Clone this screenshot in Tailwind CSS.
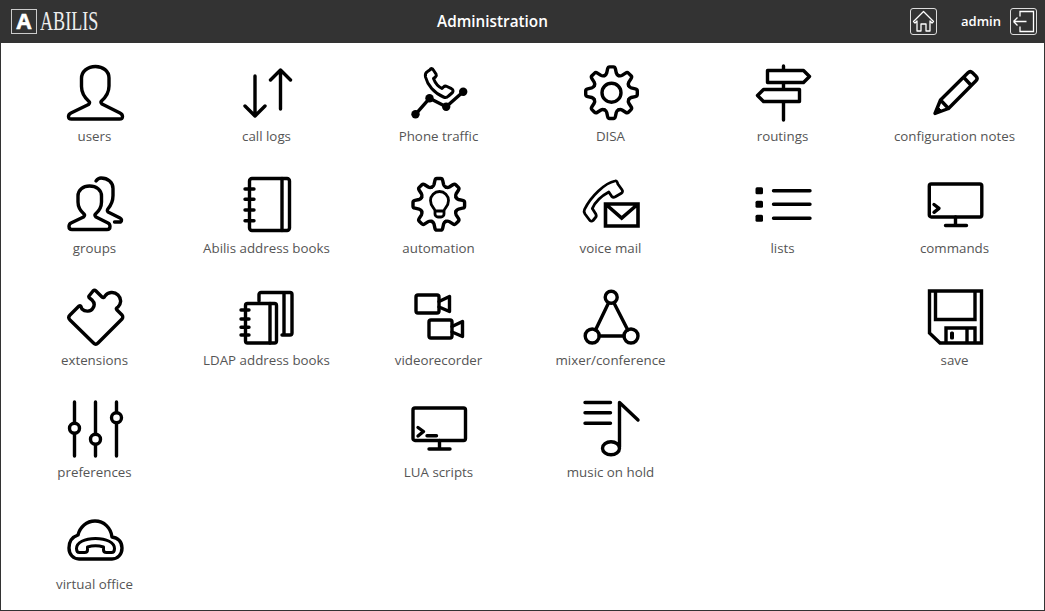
<!DOCTYPE html>
<html lang="en">
  <head>
    <meta charset="UTF-8" />
    <title>Administration</title>
    <script src="https://cdn.jsdelivr.net/npm/@tailwindcss/browser@4"></script>
  </head>
  <body class="bg-white font-['Open_Sans',sans-serif] overflow-hidden">
    <div class="w-[1045px] h-[611px] border border-t-0 border-[#333] box-border">
      <!-- top bar -->
      <header class="h-[43px] -mx-px bg-[#333] flex items-center pl-[11px] pr-[8px] text-white">
        <div class="w-[399px] flex items-center">
          <div class="w-[26px] h-[25px] border border-[#ccc] flex items-center justify-center">
            <span class="font-['Liberation_Sans',sans-serif] font-bold text-[22px] leading-none [-webkit-text-stroke:0.6px_#fff]">A</span>
          </div>
          <span class="ml-[3px] font-['Liberation_Serif',serif] text-[27px] leading-none scale-x-[0.67] origin-left text-[#eee]">ABILIS</span>
        </div>
        <div class="w-[165px] text-center text-[15.3px] font-semibold">Administration</div>
        <button class="ml-auto w-[27px] h-[27px] border border-[#ddd] rounded-[3px] flex items-center justify-center">
          <svg width="23" height="23" viewBox="0 0 23 23" fill="none" stroke="#fff" stroke-width="1.3" stroke-linejoin="round"><path d="M1.5 11.5 11.5 1.5l10 10-1.5 1.500-2-2v10h-4v-7H9v7H5V11l-2 2z"/></svg>
        </button>
        <span class="ml-[24px] text-[13px] font-semibold">admin</span>
        <button class="ml-[9px] w-[27px] h-[27px] border border-[#ddd] rounded-[3px] flex items-center justify-center">
          <svg width="25" height="25" viewBox="0 0 25 25" fill="none" stroke="#fff" stroke-width="1.3"><path d="M9 7.500V2.500h13.500v20H9v-5M2.500 12.500h13M2.500 12.500l4-4M2.500 12.500l4 4"/></svg>
        </button>
      </header>

      <svg width="0" height="0" class="absolute">
        <defs>
          <path id="tooth" d="M-7.100-17.100Q-5.300-17.900-4.800-19.700L-3.900-23.800Q-3.500-25.800-1.900-25.800H1.900Q3.500-25.800 3.900-23.800L4.800-19.700Q5.300-17.900 7.100-17.100"/>
          <g id="gear">
            <use href="#tooth"/>
            <use href="#tooth" transform="rotate(45)"/>
            <use href="#tooth" transform="rotate(90)"/>
            <use href="#tooth" transform="rotate(135)"/>
            <use href="#tooth" transform="rotate(180)"/>
            <use href="#tooth" transform="rotate(225)"/>
            <use href="#tooth" transform="rotate(270)"/>
            <use href="#tooth" transform="rotate(315)"/>
          </g>
        </defs>
      </svg>

      <main class="ml-[7.5px] pt-[20px] grid grid-cols-[repeat(6,172px)] auto-rows-[112px] text-[13.33px] leading-[18px] text-[#555]">
        <!-- row 1 -->
        <a class="flex flex-col items-center">
          <svg width="60" height="60" viewBox="0 0 60 60" fill="none" stroke="#000" stroke-width="3.400" stroke-linecap="round" stroke-linejoin="round"><path d="M30.500 3.500c-8 0-14 5-14 12v8c0 6 3 11 7.500 15 1 1 .5 2-.5 3L6 50c-2 1-2.500 2-2.500 3.500 0 2 1 2.500 3 2.500h48c2 0 3-.5 3-2.500 0-1.500-.5-2.500-2.500-3.500L37 41c-1-1-1.500-2-.5-3 4.500-4 7.500-9 7.500-15v-8c0-7-6-11.500-13.500-11.500z"/></svg>
          <span class="mt-[4px]">users</span>
        </a>
        <a class="flex flex-col items-center">
          <svg width="60" height="60" viewBox="0 0 60 60" fill="none" stroke="#000" stroke-width="3.400" stroke-linecap="round" stroke-linejoin="round"><path d="M18 13V53M8 43l10 10 10-10M43.500 7V46M33.500 17 43.500 7l10 10"/></svg>
          <span class="mt-[4px]">call logs</span>
        </a>
        <a class="flex flex-col items-center">
          <svg width="60" height="60" viewBox="0 0 60 60" fill="none" stroke="#000" stroke-width="3.400" stroke-linecap="round" stroke-linejoin="round"><path stroke-width="3" d="M21.500 6.500l-3 2c-2.500 1.500-2.500 3-2 5.500 2 8 8.500 16 18 20 2 .8 3.500.5 5-1l4-3.500c1-1.500.5-3-1-3.800l-4.500-2.200c-1.500-.7-2.500-.5-3.500.5l-1.500 1.500c-4-2-7-6-8.500-10l2-1.500c1-1 1-2 .5-3l-3-4.500c-.5-1-1.500-1.200-2.500-.5z"/><path d="M6.500 51.300 20.500 35.300 37.200 43.700 54.200 28.700"/><g fill="#000" stroke="none"><circle cx="6.500" cy="51.300" r="4.200"/><circle cx="20.500" cy="35.300" r="4.200"/><circle cx="37.200" cy="43.700" r="4.200"/><circle cx="54.200" cy="28.700" r="4.200"/></g></svg>
          <span class="mt-[4px]">Phone traffic</span>
        </a>
        <a class="flex flex-col items-center">
          <svg width="60" height="60" viewBox="0 0 60 60" fill="none" stroke="#000" stroke-width="3.400" stroke-linecap="round" stroke-linejoin="round"><use href="#gear" x="30.500" y="29.700"/><circle cx="30.500" cy="29.700" r="9.500"/></svg>
          <span class="mt-[4px]">DISA</span>
        </a>
        <a class="flex flex-col items-center">
          <svg width="60" height="60" viewBox="0 0 60 60" fill="none" stroke="#000" stroke-width="3.400" stroke-linecap="round" stroke-linejoin="round"><path d="M14.500 7.500H50.500l6 6-6 6H14.500zM46.500 26.500H10.500l-6 6 6 6h36zM30.500 3V7.500M30.500 19.500v7M30.500 38.500V57"/></svg>
          <span class="mt-[4px]">routings</span>
        </a>
        <a class="flex flex-col items-center">
          <svg width="60" height="60" viewBox="0 0 60 60" fill="none" stroke="#000" stroke-width="3.400" stroke-linecap="round" stroke-linejoin="round"><path d="M15.500 37 43 9.800c1.500-1.500 3-1.500 4.500 0l3.500 3.500c1.500 1.500 1.500 3 0 4.500L23.500 45.500 10 50.500zM38.800 14.500l7.500 8M15.500 37l8 8.500"/><path fill="#000" d="M10 50.500l2.500-7 4.500 4.500z" stroke-width="1"/></svg>
          <span class="mt-[4px]">configuration notes</span>
        </a>

        <!-- row 2 -->
        <a class="flex flex-col items-center">
          <svg width="60" height="60" viewBox="0 0 60 60" fill="none" stroke="#000" stroke-width="3.400" stroke-linecap="round" stroke-linejoin="round"><path d="M24.500 11c-6.500 0-11.500 4-11.500 10v6c0 5 2.500 9 6 12 1 1 .5 2-.5 3L6 48c-2 1-2 2-2 3.500 0 2 1 3 3 3h35c2 0 3-1 3-3 0-1.500 0-2.500-2-3.500L31 42c-1-1-1.500-2-.5-3 3.500-3 6-7 6-12v-6c0-6-5-10-12-10z"/><path d="M31 6c1.500-2 3-3 5-3 7 0 12 4.500 12 10.500v7c0 5-2 10-5.500 14-.5 1-.2 1.500.5 2.500L55 43c2 1 2 3 .5 4h-6"/></svg>
          <span class="mt-[4px]">groups</span>
        </a>
        <a class="flex flex-col items-center">
          <svg width="60" height="60" viewBox="0 0 60 60" fill="none" stroke="#000" stroke-width="3.400" stroke-linecap="round" stroke-linejoin="round"><rect x="12.500" y="3.500" width="40" height="52" rx="2.500"/><path d="M45 3.500v52M8 14h9M8 24.300h9M8 35h9M8 45.700h9"/></svg>
          <span class="mt-[4px]">Abilis address books</span>
        </a>
        <a class="flex flex-col items-center">
          <svg width="60" height="60" viewBox="0 0 60 60" fill="none" stroke="#000" stroke-width="3.400" stroke-linecap="round" stroke-linejoin="round"><use href="#gear" x="29.800" y="29.300"/><path stroke-width="2.800" d="M26 36c0-3-4.500-4-4.500-10.500a9 9 0 0 1 18 0c0 6.500-4.500 7.500-4.500 10.500zM26 36v3a3 3 0 0 0 3 3h3a3 3 0 0 0 3-3v-3"/></svg>
          <span class="mt-[4px]">automation</span>
        </a>
        <a class="flex flex-col items-center">
          <svg width="60" height="60" viewBox="0 0 60 60" fill="none" stroke="#000" stroke-width="3.400" stroke-linecap="round" stroke-linejoin="round"><path stroke-width="2.800" d="M34 6C24 8 10 21 3.500 34.500c-1 2-.5 3 .5 4.500l4.500 6c1 1.500 2.500 1.500 3.500.5l2.500-3c1-1 1-2 .3-3.500l-3.500-5.500c3-7 10-13 16.500-16.500l3 4.500c1 1 2.200 1 3.500.3l6-3.500c1.500-1 1.500-2.500.7-3.500l-4-5.500C36 6 35.300 5.700 34 6z"/><path fill="#fff" stroke="none" d="M22 26h38v28H22z"/><path stroke-linejoin="miter" stroke-linecap="butt" stroke-width="3.600" d="M24.500 29h32.500v22H24.500zM24.500 29 40.700 43 57 29"/></svg>
          <span class="mt-[4px]">voice mail</span>
        </a>
        <a class="flex flex-col items-center">
          <svg width="60" height="60" viewBox="0 0 60 60" fill="none" stroke="#000" stroke-width="3.400" stroke-linecap="round" stroke-linejoin="round"><path d="M20.500 15.700H57M20.500 29.300H57M20.500 43.300H57"/><g fill="#000" stroke="none"><rect x="2.500" y="12.200" width="7.500" height="7" rx="1.500"/><rect x="2.500" y="25.800" width="7.500" height="7" rx="1.500"/><rect x="2.500" y="39.800" width="7.500" height="7" rx="1.500"/></g></svg>
          <span class="mt-[4px]">lists</span>
        </a>
        <a class="flex flex-col items-center">
          <svg width="60" height="60" viewBox="0 0 60 60" fill="none" stroke="#000" stroke-width="3.400" stroke-linecap="round" stroke-linejoin="round"><rect x="4.300" y="9" width="52.500" height="33" rx="2"/><path d="M30.500 42v8.500M20.500 50.500h21M9 29.500l5 3.800-5 4"/></svg>
          <span class="mt-[4px]">commands</span>
        </a>

        <!-- row 3 -->
        <a class="flex flex-col items-center">
          <svg width="60" height="60" viewBox="0 0 60 60" fill="none" stroke="#000" stroke-width="3.400" stroke-linecap="round" stroke-linejoin="round"><path d="M5 28l9-9c2-1 2 1 3 3 3 3 9 3 11-1 2-3 1-6-1-8-2-2-4-2-3-4l4-5c1-1 2-1 3 0l6 6c1 1 2 1 3-1 3-4 9-5 13-1 4 4 3 9 0 12-2 1-2 2-1 3l5 5c1 1 1 3 0 4L33 56c-1.500 1.500-3 1.500-4.500 0L5 33c-1.500-1.500-1.500-3.500 0-5z"/></svg>
          <span class="mt-[4px]">extensions</span>
        </a>
        <a class="flex flex-col items-center">
          <svg width="60" height="60" viewBox="0 0 60 60" fill="none" stroke="#000" stroke-width="3.400" stroke-linecap="round" stroke-linejoin="round"><rect x="8.500" y="16.500" width="31" height="39.500" rx="2"/><path d="M33 16.500V56M4 23h8M4 32h8M4 40.300h8M4 48h8M22 14V7.500c0-1.500 1-2 2-2h29c1.500 0 2 1 2 2V46c0 1.500-.5 2-2 2h-8M47 5.500V48"/></svg>
          <span class="mt-[4px]">LDAP address books</span>
        </a>
        <a class="flex flex-col items-center">
          <svg width="60" height="60" viewBox="0 0 60 60" fill="none" stroke="#000" stroke-width="3.400" stroke-linecap="round" stroke-linejoin="round"><rect x="7" y="8" width="23" height="18" rx="2"/><path d="M30 14.500 40.500 9.500v15L30 20"/><rect x="20" y="33" width="23" height="18" rx="2"/><path d="M43 39.500 53.500 34.500v15L43 45"/></svg>
          <span class="mt-[4px]">videorecorder</span>
        </a>
        <a class="flex flex-col items-center">
          <svg width="60" height="60" viewBox="0 0 60 60" fill="none" stroke="#000" stroke-width="3.400" stroke-linecap="round" stroke-linejoin="round"><circle cx="30.200" cy="10.300" r="6"/><circle cx="11.200" cy="49" r="7"/><circle cx="50" cy="49" r="7"/><path d="M27.500 16 14.500 43M33 16 46.800 43M18.200 49H43"/></svg>
          <span class="mt-[4px]">mixer/conference</span>
        </a>
        <a class="col-start-6 flex flex-col items-center">
          <svg width="60" height="60" viewBox="0 0 60 60" fill="none" stroke="#000" stroke-width="3.400" stroke-linecap="square" stroke-linejoin="miter"><path d="M4.500 4H56.500V56H15L4.500 46zM10.500 4V32.500H50V4M21 56V41H50V56M42 41V56"/><rect x="25" y="44.500" width="4" height="8" rx="1.500" fill="#000" stroke="none"/></svg>
          <span class="mt-[4px]">save</span>
        </a>

        <!-- row 4 -->
        <a class="flex flex-col items-center">
          <svg width="60" height="60" viewBox="0 0 60 60" fill="none" stroke="#000" stroke-width="3.400" stroke-linecap="round" stroke-linejoin="round"><path d="M9.500 3V57M30.500 3V57M51.500 3V57"/><g fill="#fff"><circle cx="9.500" cy="29.300" r="5"/><circle cx="30.500" cy="40.300" r="5"/><circle cx="51.500" cy="18.700" r="5"/></g></svg>
          <span class="mt-[4px]">preferences</span>
        </a>
        <a class="col-start-3 flex flex-col items-center">
          <svg width="60" height="60" viewBox="0 0 60 60" fill="none" stroke="#000" stroke-width="3.400" stroke-linecap="round" stroke-linejoin="round"><rect x="4" y="9" width="52.500" height="32.500" rx="2"/><path d="M30.500 41.500v8.500M20 50h21M9 28.500l5.500 4-5.500 4.500M18 36.800h9.500"/></svg>
          <span class="mt-[4px]">LUA scripts</span>
        </a>
        <a class="flex flex-col items-center">
          <svg width="60" height="60" viewBox="0 0 60 60" fill="none" stroke="#000" stroke-width="3.400" stroke-linecap="round" stroke-linejoin="round"><path d="M4 3.500H29.500M4 13.800H29.500M4 24.300H29.500M38.500 48V3.500L57 21"/><ellipse cx="30" cy="49.300" rx="8.500" ry="6.500"/></svg>
          <span class="mt-[4px]">music on hold</span>
        </a>

        <!-- row 5 -->
        <a class="col-start-1 flex flex-col items-center">
          <svg width="60" height="60" viewBox="0 0 60 60" fill="none" stroke="#000" stroke-width="3.400" stroke-linecap="round" stroke-linejoin="round"><path d="M14 48h33c6 0 10-5 10-11 0-6-4-10.500-10-11-1-9-8-16-17-16-8.500 0-15 6-17 14-6 2-9 7-9 13 0 6 4 11 10 11z"/><path stroke-width="3" d="M11.500 37.500c0-6 8-10 19-10s19 4 19 10c0 3-1 4-3 4h-5c-2 0-3-1-3-2.500v-3c-5-1.500-11-1.500-16 0v3c0 1.500-1 2.500-3 2.500h-5c-2 0-3-1-3-4z"/></svg>
          <span class="mt-[4px]">virtual office</span>
        </a>
      </main>
    </div>
  </body>
</html>
